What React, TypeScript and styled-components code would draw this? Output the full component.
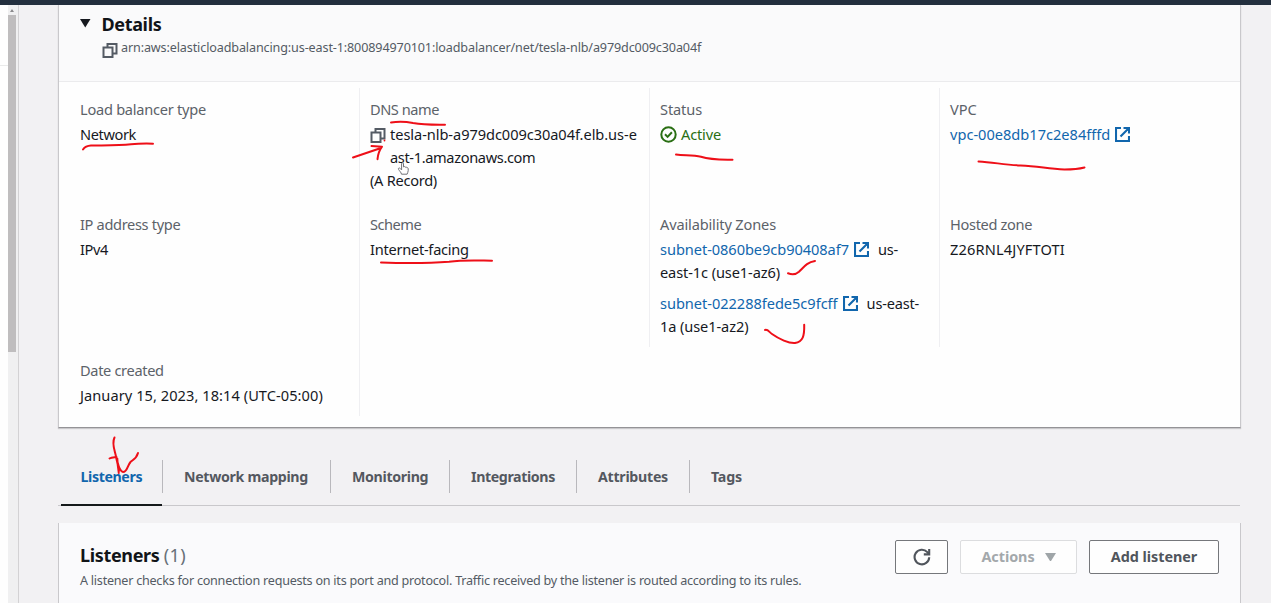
import React from 'react';
import styled, { createGlobalStyle, css } from 'styled-components';

const GlobalStyle = createGlobalStyle`
  * { box-sizing: border-box; }
  body {
    margin: 0;
    overflow: hidden;
    background: #f2f1f3;
    font-family: "Noto Sans", "Open Sans", sans-serif;
    font-size: 14.6px;
    line-height: 23px;
    color: #16191f;
  }
`;

const Page = styled.div`
  position: relative;
  display: flex;
  flex-direction: column;
  width: 1271px;
  height: 603px;
  overflow: hidden;
`;

const TopBar = styled.div`
  flex: none;
  height: 5px;
  background: #232f3e;
`;

const Body = styled.div`
  display: flex;
  flex: 1;
  min-height: 0;
`;

const SideNav = styled.div`
  flex: none;
  width: 8px;
  padding-top: 60px;
  background: #fefefe;
`;

const SideRule = styled.div`
  height: 1px;
  background: #e9eaea;
`;

const ScrollTrack = styled.div`
  display: flex;
  flex-direction: column;
  flex: none;
  width: 11px;
  padding-right: 2px;
  background: #f0f0f1;
  border-right: 1px solid #d3d2d4;
`;

const ScrollArrow = styled.div`
  display: flex;
  align-items: center;
  justify-content: center;
  height: 10px;
`;

const ScrollThumb = styled.div`
  height: 337px;
  background: #bfbdbe;
`;

const Main = styled.main`
  display: flex;
  flex-direction: column;
  flex: 1;
  padding: 0 30px 0 39px;
`;

const panel = css`
  flex: none;
  border-left: 1px solid #c9c8cb;
  border-right: 1px solid #c9c8cb;
`;

const DetailsPanel = styled.section`
  ${panel}
  height: 423px;
  background: #fefefe;
  border-bottom: 1px solid #949396;
  box-shadow: 0 1px 1px #c9c8cb;
`;

const DetailsHeader = styled.header`
  height: 77px;
  padding: 6px 21px 0;
  background: #fafafb;
  border-bottom: 1px solid #ebebed;
`;

const TitleRow = styled.div`
  display: flex;
  align-items: center;
  height: 25px;
  gap: 11px;
`;

const Title = styled.h2`
  margin: 0;
  font-size: 18px;
  font-weight: 700;
  line-height: 24px;
  letter-spacing: -0.35px;
  color: #111418;
`;

const ArnRow = styled.div`
  display: flex;
  align-items: flex-start;
  gap: 3px;
  padding-left: 22px;
  font-size: 12.6px;
  line-height: 24px;
  letter-spacing: -0.13px;
  color: #545b64;

  svg { margin-top: 6px; }
`;

const Grid = styled.div`
  display: grid;
  grid-template-columns: 300px 290px 290px 1fr;
  grid-template-rows: 115px 144px 69px;
  padding-top: 6px;
`;

const Cell = styled.div<{ $first?: boolean; $low?: boolean }>`
  padding: ${p => (p.$low ? 11.5 : 9.5)}px 0 0 ${p => (p.$first ? 21 : 10)}px;
  border-left: ${p => (p.$first ? 'none' : '1px solid #efeff2')};
  white-space: nowrap;
`;

const Label = styled.div<{ $ls?: number }>`
  color: #5c6269;
  letter-spacing: ${p => p.$ls ?? 0}px;
`;

const Value = styled.div<{ $ls?: number }>`
  margin-top: 2px;
  letter-spacing: ${p => p.$ls ?? 0}px;
`;

const Line = styled.div<{ $ls?: number; $spaced?: boolean }>`
  display: flex;
  align-items: center;
  height: 23px;
  margin-top: ${p => (p.$spaced ? 8 : 0)}px;
  letter-spacing: ${p => p.$ls ?? 0}px;
`;

const CopyBlock = styled.div`
  display: flex;
  gap: 4px;

  > svg { flex: none; margin-top: 4px; }
`;

const LinkText = styled.a<{ $ls?: number }>`
  display: inline-flex;
  align-items: center;
  gap: 5px;
  margin-right: 9px;
  color: #1166ad;
  letter-spacing: ${p => p.$ls ?? 0}px;
`;

const StatusText = styled.span`
  display: inline-flex;
  align-items: center;
  gap: 4px;
  height: 23px;
  color: #2a6f14;
`;

const Tabs = styled.nav`
  display: flex;
  flex: none;
  height: 46px;
  margin: 32px 1px 0 0;
  padding-left: 3px;
  border-bottom: 1px solid #c9c8cb;
`;

const Tab = styled.a<{ $width: number; $ls: number; $active?: boolean; $last?: boolean }>`
  position: relative;
  width: ${p => p.$width}px;
  height: 33px;
  padding-left: ${p => (p.$active ? 19.5 : 21)}px;
  border-right: ${p => (p.$last ? 'none' : '1px solid #b9b8bc')};
  font-size: 14.2px;
  font-weight: 700;
  line-height: 33px;
  letter-spacing: ${p => p.$ls}px;
  color: ${p => (p.$active ? '#1166ad' : '#54585f')};

  ${p => p.$active && css`
    &::after {
      content: "";
      position: absolute;
      left: 0;
      right: 0;
      top: 44px;
      height: 2px;
      background: #14191a;
    }
  `}
`;

const ListenersPanel = styled.section`
  ${panel}
  display: flex;
  align-items: flex-start;
  justify-content: space-between;
  flex: 1;
  margin-top: 17px;
  padding: 17px 21px 0;
  background: #fafafc;
`;

const Heading = styled.div`
  padding-top: 3px;
`;

const Count = styled.span`
  font-weight: 400;
  letter-spacing: 0.4px;
  color: #687078;
`;

const Description = styled.p`
  margin: 0;
  font-size: 12.6px;
  line-height: 27px;
  letter-spacing: -0.245px;
  color: #545b64;
`;

const ButtonRow = styled.div`
  display: flex;
  gap: 12px;
`;

const Button = styled.button<{ $width: number; $muted?: boolean }>`
  display: flex;
  align-items: center;
  justify-content: center;
  gap: 10px;
  width: ${p => p.$width}px;
  height: 34px;
  padding: 0;
  border: 1px solid ${p => (p.$muted ? '#dcdddf' : '#75777b')};
  border-radius: 2px;
  background: #fefefe;
  font: 700 14.4px/22px "Noto Sans", "Open Sans", sans-serif;
  letter-spacing: -0.05px;
  color: ${p => (p.$muted ? '#a3a8ab' : '#50555c')};
`;

const Overlay = styled.svg`
  position: absolute;
  left: 0;
  top: 0;
  pointer-events: none;
`;

const CopyIcon = () => (
  <svg width="16" height="16" viewBox="0 0 16 16" fill="none" stroke="#545b64" strokeWidth="2">
    <path d="M1.500 5.500h9V15h-9z" />
    <path d="M5.500 5.500V2H14.500v9.500h-4" />
  </svg>
);

const ExternalIcon = () => (
  <svg width="15" height="15" viewBox="0 0 15 15" fill="none" stroke="#1166ad" strokeWidth="2.100">
    <path d="M6 1H1v13h13V9" />
    <path d="M8.500 1H14v5.500M14 1L5.500 9.500" />
  </svg>
);

const CheckIcon = () => (
  <svg width="17" height="17" viewBox="0 0 17 17" fill="none" stroke="#2a6f14" strokeWidth="2">
    <circle cx="8.500" cy="8.500" r="7.200" />
    <path d="M5 8.300l2.600 2.600 4.300-4.600" />
  </svg>
);

const RefreshIcon = () => (
  <svg width="18" height="18" viewBox="0 0 18 18" fill="none" stroke="#50555c" strokeWidth="2.100">
    <path d="M16.200 9.200A7.300 7.300 0 1 1 14.300 4.100L16 6" />
    <path d="M16.200 1v5.400h-5.400" />
  </svg>
);

const Caret = ({ color, size }: { color: string; size: number }) => (
  <svg width={size} height={size * 0.8} viewBox="0 0 10 8">
    <path d="M0 0h10L5 8z" fill={color} />
  </svg>
);

const tabs = [
  { label: 'Listeners', width: 102, ls: -0.38 },
  { label: 'Network mapping', width: 168, ls: -0.32 },
  { label: 'Monitoring', width: 119, ls: -0.33 },
  { label: 'Integrations', width: 127, ls: -0.38 },
  { label: 'Attributes', width: 113, ls: -0.27 },
  { label: 'Tags', width: 80, ls: -0.18 },
];

const Annotations = () => (
  <Overlay width="1271" height="603" viewBox="0 0 1271 603">
    <path
      d="M401.500 174.200c-.4-1.900-1.700-2.800-2.900-4.700-.8-1.400.8-2.100 1.800-.9l1.200 1.300v-6.100c0-1.500 1.900-1.500 1.900 0v3.100c.8-.7 1.700-.3 1.800.4.700-.6 1.500-.2 1.600.5.800-.3 1.300.2 1.300.9v2c0 1.500-.9 2.300-1.100 3.500z"
      fill="#fff" stroke="#707278" strokeWidth="1"
    />
    <circle cx="384.500" cy="140.500" r="0.900" fill="#f00a14" />
    <g fill="none" stroke="#ee0f18" strokeWidth="2" strokeLinecap="round" strokeLinejoin="round">
      <path d="M83 149.500c2-3 4-3.800 8-4 14-.2 28 .2 40-1.200 8-.8 14-.8 22-.6" />
      <path d="M391 122.500c8-1.500 15-1 22 .5 11 2 20 1.800 32 1.700" />
      <path d="M353 157.500l28-9.500M371.500 146l10.500.7c-3 4-4 7.500-4.500 12.500" />
      <path d="M381 262.500c24 .8 48 .8 68-.8 15-2 28-1.200 43-1" />
      <path d="M676 154.500c9 1 17 .5 25 2.200 10 3.200 20 2.800 31.500 3" />
      <path d="M978.500 161.500c15 .8 25 3.200 42 4 18 .5 26 3.200 44 4 8 0 13-.2 20-2" />
      <path d="M788 273.300c4 1.500 8 1.200 11-1.500 5-5 8-9.500 16-10.800" />
      <path d="M765 330c3-1 4 2 7 4 7 5 17 9.500 23 9 8-1.500 9.500-7 9.200-18.200" />
      <path d="M114.500 437.500c-3 6 0 12 1.500 19 1 6 3 11 2.800 16.500-.8-5-1.300-8-1.500-14.500M109.500 458.500c2-1.500 4-1.200 7-1.500M117.500 462c1 4 2.500 9.500 5.500 10 4.500 0 4-6 7.500-10 3-2.500 6-3.500 7.500-9" />
    </g>
  </Overlay>
);

export default function App() {
  return (
    <Page>
      <GlobalStyle />
      <TopBar />
      <Body>
        <SideNav><SideRule /></SideNav>
        <ScrollTrack>
          <ScrollArrow>
            <svg width="4" height="3" viewBox="0 0 4 3"><path d="M0 3h4L2 0z" fill="#8b8b8d" /></svg>
          </ScrollArrow>
          <ScrollThumb />
        </ScrollTrack>
        <Main>
          <DetailsPanel>
            <DetailsHeader>
              <TitleRow>
                <Caret color="#16191f" size={10.500} />
                <Title>Details</Title>
              </TitleRow>
              <ArnRow>
                <CopyIcon />
                <span>arn:aws:elasticloadbalancing:us-east-1:800894970101:loadbalancer/net/tesla-nlb/a979dc009c30a04f</span>
              </ArnRow>
            </DetailsHeader>
            <Grid>
              <Cell $first>
                <Label $ls={-0.26}>Load balancer type</Label>
                <Value $ls={-0.4}>Network</Value>
              </Cell>
              <Cell>
                <Label $ls={-0.46}>DNS name</Label>
                <Value>
                  <CopyBlock>
                    <CopyIcon />
                    <div>
                      <Line $ls={-0.06}>tesla-nlb-a979dc009c30a04f.elb.us-e</Line>
                      <Line $ls={-0.36}>ast-1.amazonaws.com</Line>
                    </div>
                  </CopyBlock>
                  <Line $ls={-0.28}>(A Record)</Line>
                </Value>
              </Cell>
              <Cell>
                <Label $ls={-0.12}>Status</Label>
                <Value $ls={-0.18}><StatusText><CheckIcon />Active</StatusText></Value>
              </Cell>
              <Cell>
                <Label>VPC</Label>
                <Value><Line><LinkText>vpc-00e8db17c2e84fffd<ExternalIcon /></LinkText></Line></Value>
              </Cell>

              <Cell $first>
                <Label $ls={-0.34}>IP address type</Label>
                <Value $ls={-0.4}>IPv4</Value>
              </Cell>
              <Cell>
                <Label $ls={-0.5}>Scheme</Label>
                <Value $ls={-0.26}>Internet-facing</Value>
              </Cell>
              <Cell>
                <Label $ls={-0.16}>Availability Zones</Label>
                <Value>
                  <Line $ls={-0.2}><LinkText $ls={-0.06}>subnet-0860be9cb90408af7<ExternalIcon /></LinkText>us-</Line>
                  <Line $ls={-0.11}>east-1c (use1-az6)</Line>
                  <Line $ls={-0.2} $spaced><LinkText $ls={-0.04}>subnet-022288fede5c9fcff<ExternalIcon /></LinkText>us-east-</Line>
                  <Line $ls={-0.1}>1a (use1-az2)</Line>
                </Value>
              </Cell>
              <Cell>
                <Label $ls={-0.33}>Hosted zone</Label>
                <Value $ls={0.15}>Z26RNL4JYFTOTI</Value>
              </Cell>

              <Cell $first $low>
                <Label $ls={-0.34}>Date created</Label>
                <Value $ls={0.06}>January 15, 2023, 18:14 (UTC-05:00)</Value>
              </Cell>
              <Cell />
            </Grid>
          </DetailsPanel>

          <Tabs>
            {tabs.map((tab, i) => (
              <Tab key={tab.label} $width={tab.width} $ls={tab.ls} $active={i === 0} $last={i === tabs.length - 1}>
                {tab.label}
              </Tab>
            ))}
          </Tabs>

          <ListenersPanel>
            <Heading>
              <Title>Listeners <Count>(1)</Count></Title>
              <Description>
                A listener checks for connection requests on its port and protocol. Traffic received by the listener is routed according to its rules.
              </Description>
            </Heading>
            <ButtonRow>
              <Button $width={53} aria-label="Refresh"><RefreshIcon /></Button>
              <Button $width={117} $muted>Actions <Caret color="#9fa5a8" size={11} /></Button>
              <Button $width={130}>Add listener</Button>
            </ButtonRow>
          </ListenersPanel>
        </Main>
      </Body>
      <Annotations />
    </Page>
  );
}
